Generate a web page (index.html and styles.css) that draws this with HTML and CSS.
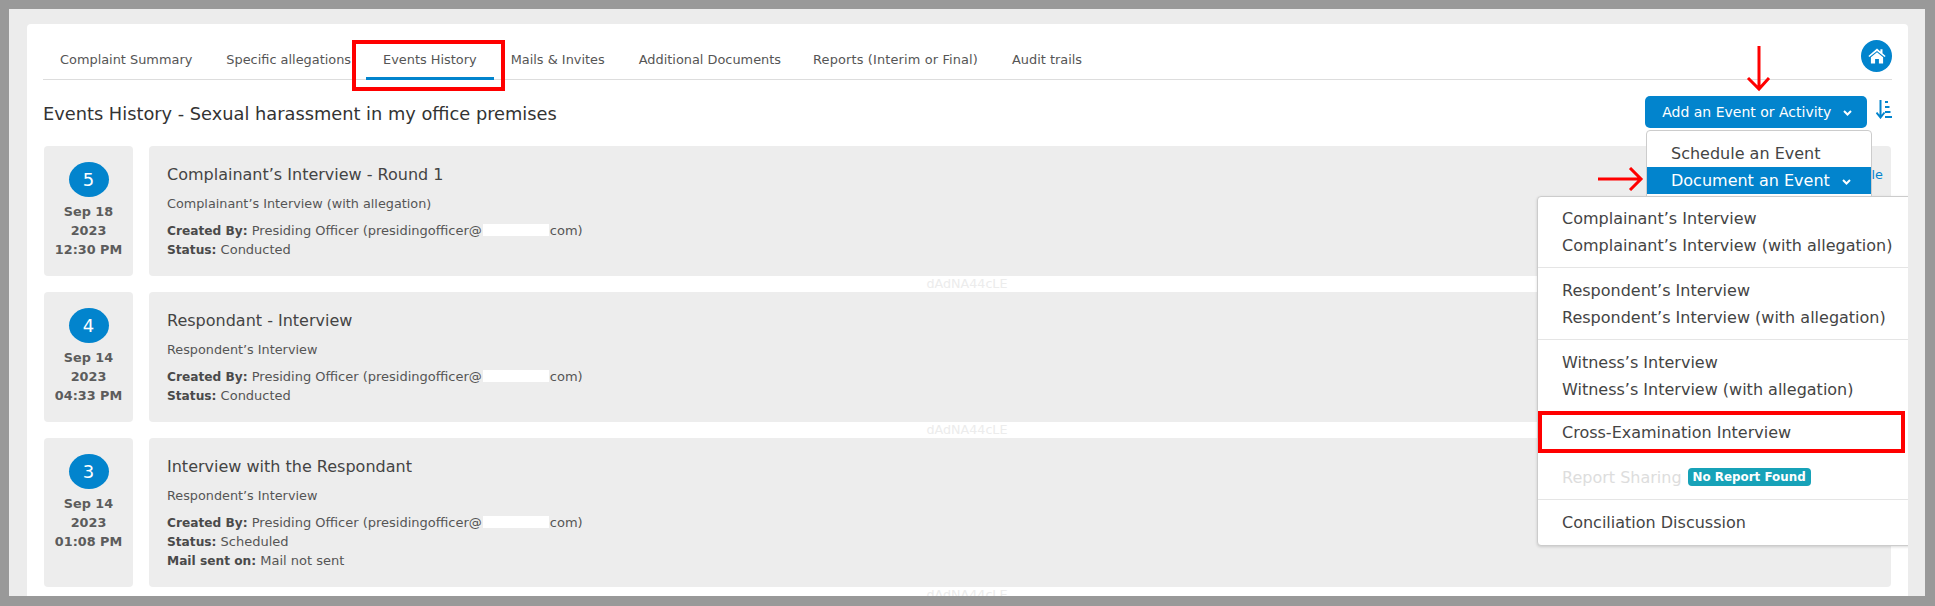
FILE: index.html
```html
<!DOCTYPE html>
<html lang="en">

<head>
  <meta charset="UTF-8" />
  <title>Events History</title>
  <link rel="stylesheet" href="styles.css">
</head>

<body>
  <div class="frame">
    <div class="card">
      <nav class="tabs">
        <a class="tab">Complaint Summary</a>
        <a class="tab">Specific allegations</a>
        <a class="tab active">Events History</a>
        <a class="tab">Mails &amp; Invites</a>
        <a class="tab">Additional Documents</a>
        <a class="tab">Reports (Interim or Final)</a>
        <a class="tab">Audit trails</a>
        <a class="home">
          <svg width="18" height="16" viewBox="0 0 18 16">
            <path fill="#fff" d="M9 .6 .4 8l1 1.100L9 2.900l7.600 6.200 1-1.100-3.100-2.700V1.300h-2.100v2.300z" />
            <path fill="#fff" d="M9 4.200 2.900 9.200v6.200h4.200v-4.300h3.800v4.300h4.200V9.200z" />
          </svg>
        </a>
      </nav>

      <div class="content">
        <div class="toolbar">
          <h2 class="page-title">Events History - Sexual harassment in my office premises</h2>
          <div class="actions">
            <button class="add-btn">Add an Event or Activity
              <svg class="chev" width="9" height="6" viewBox="0 0 9 6"><path d="M1 1l3.500 3.500L8 1" fill="none" stroke="#fff" stroke-width="2" /></svg>
            </button>
            <svg class="sort" width="16" height="19" viewBox="0 0 16 19">
              <path d="M4.500 0v16M.5 12.500l4 5 4-5" fill="none" stroke="#0284cd" stroke-width="2" />
              <path d="M9 1h3v2H9zM9 6h4.500v2H9zM9 11h5.500v2H9zM9 16h7v2H9z" fill="#0284cd" />
            </svg>

            <div class="menu">
              <div class="menu-item">Schedule an Event</div>
              <div class="menu-item selected">Document an Event
                <svg class="chev" width="9" height="6" viewBox="0 0 9 6"><path d="M1 1l3.500 3.500L8 1" fill="none" stroke="#fff" stroke-width="2" /></svg>
              </div>

              <div class="submenu">
                <div class="group">
                  <div class="sub-item">Complainant’s Interview</div>
                  <div class="sub-item">Complainant’s Interview (with allegation)</div>
                </div>
                <div class="group">
                  <div class="sub-item">Respondent’s Interview</div>
                  <div class="sub-item">Respondent’s Interview (with allegation)</div>
                </div>
                <div class="group">
                  <div class="sub-item">Witness’s Interview</div>
                  <div class="sub-item">Witness’s Interview (with allegation)</div>
                </div>
                <div class="single marked">Cross-Examination Interview</div>
                <div class="single report">
                  <span class="disabled">Report Sharing</span>
                  <span class="badge">No Report Found</span>
                </div>
                <div class="single last">Conciliation Discussion</div>
              </div>
            </div>
          </div>
        </div>

        <div class="event">
          <div class="date">
            <span class="count">5</span>
            <div>Sep 18</div>
            <div>2023</div>
            <div>12:30 PM</div>
          </div>
          <div class="details">
            <div>
              <h3>Complainant’s Interview - Round 1</h3>
              <p class="type">Complainant’s Interview (with allegation)</p>
              <p class="meta"><b>Created By:</b> Presiding Officer (presidingofficer@<span class="hidden-text"></span>com)</p>
              <p class="meta"><b>Status:</b> Conducted</p>
            </div>
            <a class="event-link">Reschedule</a>
          </div>
        </div>
        <div class="mark">dAdNA44cLE</div>

        <div class="event">
          <div class="date">
            <span class="count">4</span>
            <div>Sep 14</div>
            <div>2023</div>
            <div>04:33 PM</div>
          </div>
          <div class="details">
            <div>
              <h3>Respondant - Interview</h3>
              <p class="type">Respondent’s Interview</p>
              <p class="meta"><b>Created By:</b> Presiding Officer (presidingofficer@<span class="hidden-text"></span>com)</p>
              <p class="meta"><b>Status:</b> Conducted</p>
            </div>
          </div>
        </div>
        <div class="mark">dAdNA44cLE</div>

        <div class="event tall">
          <div class="date">
            <span class="count">3</span>
            <div>Sep 14</div>
            <div>2023</div>
            <div>01:08 PM</div>
          </div>
          <div class="details">
            <div>
              <h3>Interview with the Respondant</h3>
              <p class="type">Respondent’s Interview</p>
              <p class="meta"><b>Created By:</b> Presiding Officer (presidingofficer@<span class="hidden-text"></span>com)</p>
              <p class="meta"><b>Status:</b> Scheduled</p>
              <p class="meta"><b>Mail sent on:</b> Mail not sent</p>
            </div>
          </div>
        </div>
        <div class="mark">dAdNA44cLE</div>
      </div>

      <svg class="arrow arrow-down" width="26" height="46" viewBox="0 0 26 46">
        <path d="M14 0v43M3 32l11 11 10-11" fill="none" stroke="#f00" stroke-width="3" />
      </svg>
      <svg class="arrow arrow-right" width="46" height="24" viewBox="0 0 46 24">
        <path d="M0 12h43M32 1l11 11-11 11" fill="none" stroke="#f00" stroke-width="3" />
      </svg>
    </div>
  </div>
</body>

</html>
```

FILE: styles.css
```css
html,
body {
  height: 100%;
}

body {
  margin: 0;
  background: #999;
  font-family: 'DejaVu Sans', Verdana, sans-serif;
  color: #444;
  overflow: hidden;
}

.frame {
  margin: 9px 10px 0 9px;
  height: 587px;
  padding: 15px 17px 0 18px;
  box-sizing: border-box;
  background: #ececec;
  overflow: hidden;
}

.card {
  position: relative;
  height: 640px;
  background: white;
  border-radius: 4px;
  overflow: hidden;
}

.tabs {
  display: flex;
  align-items: flex-start;
  height: 39px;
  margin: 16px 16px 0 16px;
  border-bottom: 1px solid #ddd;
  font-size: 12.9px;
  color: #555;
}

.tab {
  position: relative;
  height: 37px;
  line-height: 40px;
  padding: 0 17px;
  white-space: nowrap;
}

.tab:nth-child(2),
.tab:nth-child(5) {
  padding-right: 15px;
}

.tab:nth-child(6) {
  letter-spacing: 0.15px;
}

.tab.active {
  height: 37px;
  border-bottom: 3px solid #0284cd;
}

.tab.active::after {
  content: '';
  position: absolute;
  left: -14px;
  right: -11px;
  top: 0;
  bottom: -14px;
  border: 4px solid #f00;
}

.home {
  display: flex;
  align-items: center;
  justify-content: center;
  width: 31px;
  height: 32px;
  margin-left: auto;
  border-radius: 50%;
  background: #0284cd;
}

.content {
  padding: 0 17px 0 16px;
}

.toolbar {
  display: flex;
  justify-content: space-between;
  align-items: flex-start;
  height: 50px;
  padding-top: 16px;
}

.page-title {
  margin: 0;
  font-size: 17.8px;
  font-weight: normal;
  line-height: 35px;
  color: #333;
}

.actions {
  position: relative;
  display: flex;
  gap: 9px;
  margin-right: -1px;
}

.add-btn {
  width: 222px;
  height: 32px;
  padding: 0 0 0 2px;
  border: 0;
  border-radius: 5px;
  background: #0284cd;
  color: white;
  font-family: inherit;
  font-size: 14px;
}

.chev {
  margin-left: 7px;
  vertical-align: 1px;
}

.sort {
  margin-top: 4px;
}

.menu {
  position: absolute;
  top: 34px;
  left: 1px;
  width: 226px;
  height: 90px;
  padding-top: 9px;
  box-sizing: border-box;
  background: white;
  border: 1px solid #ccc;
  border-radius: 4px;
  font-size: 16px;
  z-index: 2;
}

.menu-item {
  height: 27px;
  line-height: 28px;
  padding-left: 24px;
}

.menu-item.selected {
  background: #0284cd;
  color: white;
}

.submenu {
  position: absolute;
  top: 65px;
  left: -110px;
  width: 400px;
  height: 350px;
  box-sizing: border-box;
  background: white;
  border: 1px solid #ccc;
  border-radius: 4px;
  box-shadow: 0 1px 3px rgba(0, 0, 0, 0.15);
}

.group {
  padding: 9px 0 8px 24px;
  border-bottom: 1px solid #e5e5e5;
}

.group:first-child {
  padding-top: 8px;
}

.group:nth-child(3) {
  border-bottom: 0;
}

.sub-item {
  height: 27px;
  line-height: 27px;
  white-space: nowrap;
}

.single {
  padding-left: 24px;
}

.marked {
  height: 42px;
  line-height: 36px;
  padding-left: 20px;
  box-sizing: border-box;
  border: 4px solid #f00;
  width: 367px;
}

.report {
  display: flex;
  align-items: center;
  gap: 6px;
  height: 47px;
  box-sizing: border-box;
  padding-top: 2px;
  border-bottom: 1px solid #e5e5e5;
}

.disabled {
  color: #ddd;
}

.badge {
  height: 18px;
  line-height: 18px;
  padding: 0 5px;
  border-radius: 4px;
  background: #17a2b8;
  color: white;
  font-size: 11.9px;
  font-weight: bold;
}

.last {
  line-height: 45px;
}

.event {
  display: flex;
  gap: 16px;
  height: 130px;
}

.event.tall {
  height: 149px;
}

.date {
  width: 89px;
  margin-left: 1px;
  padding-top: 16px;
  box-sizing: border-box;
  background: #ededed;
  border-radius: 4px;
  text-align: center;
  font-size: 12.8px;
  font-weight: bold;
  line-height: 19px;
  color: #5c5c5c;
}

.count {
  display: block;
  width: 40px;
  height: 35px;
  margin: 0 auto 5px;
  border-radius: 50%;
  background: #0284cd;
  color: white;
  font-size: 18px;
  font-weight: normal;
  line-height: 35px;
}

.details {
  flex: 1;
  display: flex;
  justify-content: space-between;
  padding: 19px 8px 0 18px;
  background: #ededed;
  border-radius: 4px;
}

.details h3 {
  margin: 0;
  font-size: 16px;
  font-weight: normal;
  line-height: 20px;
  color: #444;
}

.type {
  margin: 9px 0 8px;
  font-size: 12.8px;
  line-height: 19px;
  color: #555;
}

.meta {
  margin: 0;
  height: 19px;
  font-size: 13px;
  line-height: 19px;
  color: #555;
}

.meta b {
  font-size: 12.2px;
  color: #4a4a4a;
}

.hidden-text {
  display: inline-block;
  width: 66px;
  height: 12px;
  margin: 0 1px;
  vertical-align: -1px;
  background: white;
}

.event-link {
  font-size: 12.8px;
  line-height: 20px;
  color: #0284cd;
}

.mark {
  height: 16px;
  line-height: 16px;
  text-align: center;
  font-size: 12.7px;
  color: #ececec;
}

.arrow {
  position: absolute;
  z-index: 3;
}

.arrow-down {
  left: 1718px;
  top: 22px;
}

.arrow-right {
  left: 1571px;
  top: 143px;
}
```
